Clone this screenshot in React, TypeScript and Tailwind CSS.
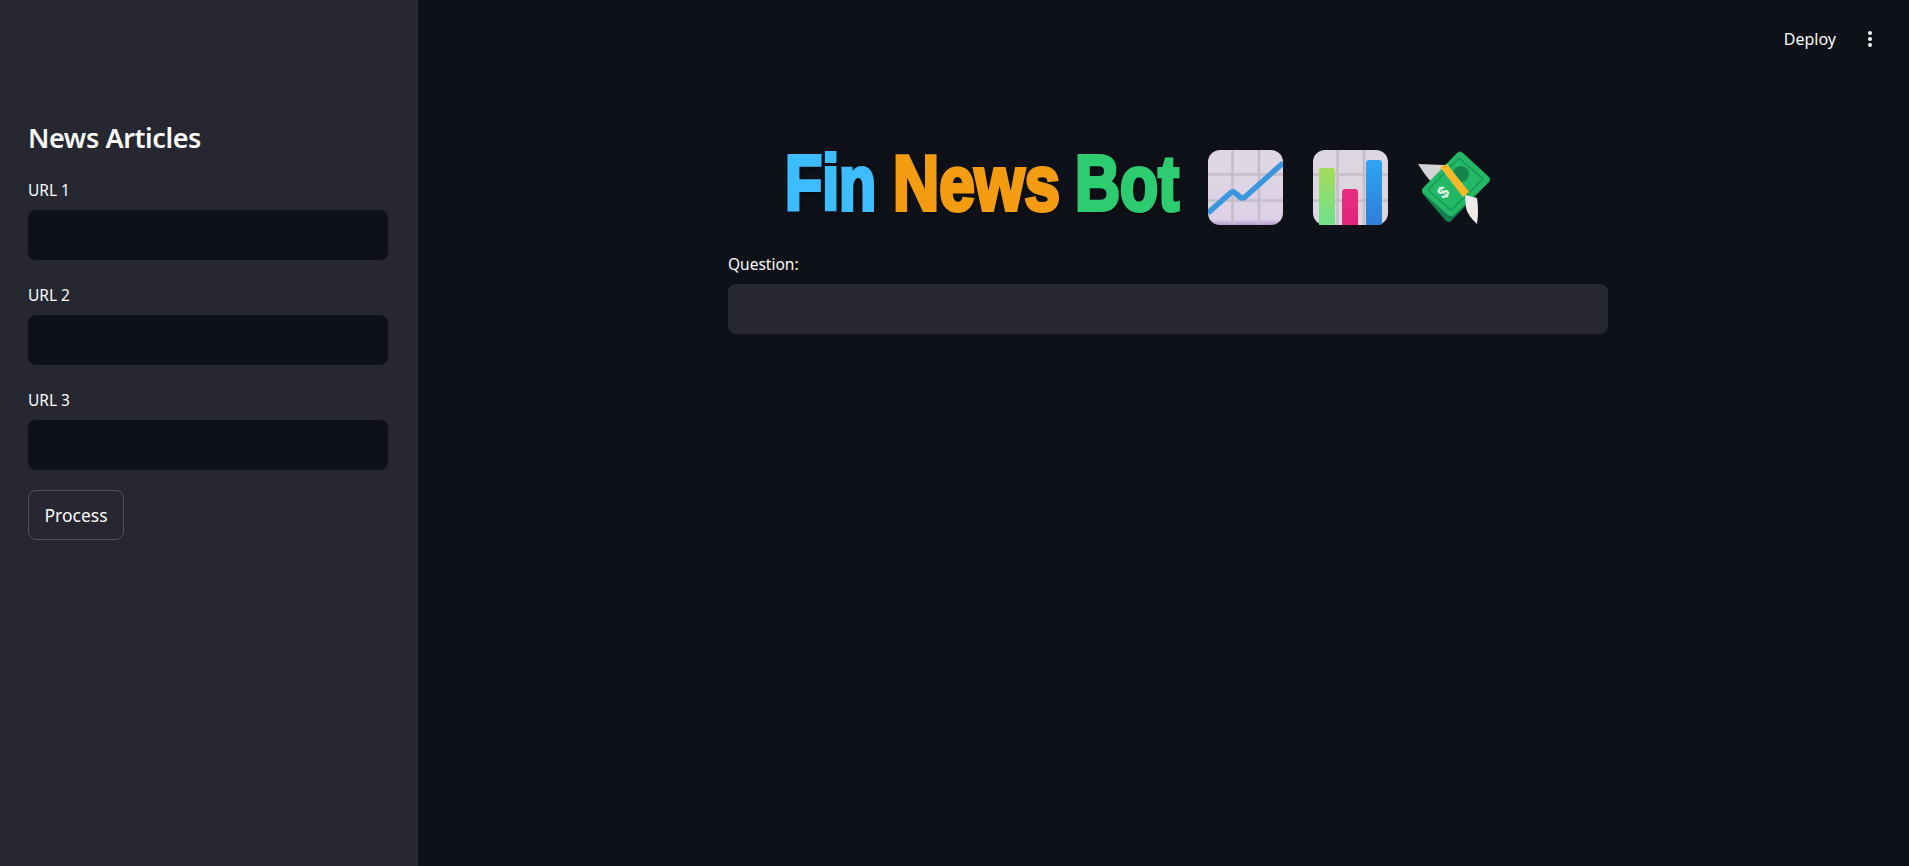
const uiFont = "font-['Noto_Sans',sans-serif]";

function ChartUp() {
  return (
    <svg width="75" height="75" viewBox="0 0 75 75" className="shrink-0">
      <defs>
        <linearGradient id="tile1" x1="0" y1="0" x2="0" y2="1">
          <stop offset="0" stopColor="#dfd8e3" />
          <stop offset="0.93" stopColor="#dcd0e6" />
          <stop offset="1" stopColor="#b79ad0" />
        </linearGradient>
      </defs>
      <rect width="75" height="75" rx="12" fill="url(#tile1)" />
      <path d="M24.500 0V75M51 0V75M0 24.500H75M0 50.500H75" stroke="#c4bdca" strokeWidth="2.500" />
      <path d="M0 63L23 42.500Q24.500 41 26.500 42.500L32 47Q34.500 49 37 47L75 13" fill="none" stroke="#3a96dd" strokeWidth="5.500" />
    </svg>
  );
}

function BarChart() {
  return (
    <svg width="75" height="75" viewBox="0 0 75 75" className="shrink-0">
      <defs>
        <linearGradient id="greenBar" x1="0" y1="0" x2="0" y2="1">
          <stop offset="0" stopColor="#a5dc5c" />
          <stop offset="1" stopColor="#6fe08c" />
        </linearGradient>
        <linearGradient id="pinkBar" x1="0" y1="0" x2="0" y2="1">
          <stop offset="0" stopColor="#e8307f" />
          <stop offset="1" stopColor="#e0247a" />
        </linearGradient>
        <linearGradient id="blueBar" x1="0" y1="0" x2="0" y2="1">
          <stop offset="0" stopColor="#2fa4f2" />
          <stop offset="1" stopColor="#2f7fd6" />
        </linearGradient>
      </defs>
      <rect width="75" height="75" rx="12" fill="#dcd6e0" />
      <path d="M24.500 0V75M51 0V75M0 24.500H75M0 50.500H75" stroke="#c4bdca" strokeWidth="2.500" />
      <path d="M6 21a3 3 0 0 1 3-3h10a3 3 0 0 1 3 3V75H6Z" fill="url(#greenBar)" />
      <path d="M29 42a3 3 0 0 1 3-3h10a3 3 0 0 1 3 3V75H29Z" fill="url(#pinkBar)" />
      <path d="M53 13a3 3 0 0 1 3-3h10a3 3 0 0 1 3 3V72a3 3 0 0 1-3 3H53Z" fill="url(#blueBar)" />
    </svg>
  );
}

function FlyingMoney() {
  return (
    <svg width="75" height="75" viewBox="0 0 75 75" className="shrink-0">
      {/* wings */}
      <path d="M0 14L26 15L30 26L14 33Q6 24 0 14Z" fill="#d6d3d6" />
      {/* bill */}
      <path d="M4 43L42 6L71 32L33 71Q31 73 28 71Z" fill="#12804f" />
      <path d="M5 38L39 3Q42 0 45 3L71 27Q73 29 71 32L36 65Q33 67 30 65L5 43Q3 40 5 38Z" fill="#22b866" />
      <path d="M10 40L41 8L65 29L33 60Z" fill="none" stroke="#159a55" strokeWidth="1.500" />
      <circle cx="43" cy="24" r="8" fill="#15854e" />
      <path d="M22 17L29 14L51 42L45 47Z" fill="#f7b928" />
      <text x="25" y="48" fontSize="17" fontWeight="700" fill="#e6f6ea" textAnchor="middle" transform="rotate(-40 25 42)" fontFamily="Liberation Sans, sans-serif">$</text>
      <path d="M47 45L59 48Q61 60 59 74Q50 66 48 58Z" fill="#efebeb" />
    </svg>
  );
}

function TextField({ label }: { label: string }) {
  return (
    <div>
      <div className="text-[15.5px] leading-[20px] text-[#fafafa] mb-[10px]">{label}</div>
      <div className="h-[50px] rounded-lg bg-[#0e1117]"></div>
    </div>
  );
}

function TitleWord({ text, className }: { text: string; className: string }) {
  return <span className={`inline-block origin-left whitespace-nowrap ${className}`}>{text}</span>;
}

export default function App() {
  return (
    <div className={`flex h-[866px] overflow-hidden bg-[#0e1117] text-[#fafafa] ${uiFont}`}>
      <aside className="w-[418px] shrink-0 bg-[#262730] pl-[28px] pr-[30px] pt-[119px]">
        <h2 className="text-[27px] leading-[38px] font-semibold tracking-[-0.4px] mb-[23px]">News Articles</h2>
        <div className="flex flex-col gap-[25px]">
          <TextField label="URL 1" />
          <TextField label="URL 2" />
          <TextField label="URL 3" />
        </div>
        <button className="mt-[20px] h-[50px] w-[96px] rounded-lg border border-[#4f5058] text-[17.5px]">
          Process
        </button>
      </aside>

      <main className="flex-1">
        <header className="flex h-[78px] items-start justify-end pt-[28px] pr-[37px]">
          <span className="text-[16px] leading-[22px]">Deploy</span>
          <div className="ml-[32px] mt-[2px] flex h-[18px] flex-col justify-between py-[1px]">
            <span className="h-[4px] w-[4px] rounded-full bg-[#fafafa]"></span>
            <span className="h-[4px] w-[4px] rounded-full bg-[#fafafa]"></span>
            <span className="h-[4px] w-[4px] rounded-full bg-[#fafafa]"></span>
          </div>
        </header>

        <div className="ml-[310px] w-[880px] pt-[72px]">
          <div className="flex h-[75px] items-center pl-[57px]">
            <h1 className="flex h-[75px] -translate-y-[4px] items-center text-[77px] leading-none font-bold font-['Liberation_Sans',sans-serif] [text-shadow:3px_3px_6px_rgba(0,0,0,0.5)]">
              <TitleWord text="Fin" className="w-[108px] scale-x-[0.79] text-[#3dbcff] [-webkit-text-stroke:4px_#3dbcff]" />
              <TitleWord text="News" className="w-[182px] scale-x-[0.83] text-[#f39c12] [-webkit-text-stroke:4px_#f39c12]" />
              <TitleWord text="Bot" className="w-[133px] scale-x-[0.81] text-[#2ecc71] [-webkit-text-stroke:4px_#2ecc71]" />
            </h1>
            <div className="flex gap-[30px]">
              <ChartUp />
              <BarChart />
              <FlyingMoney />
            </div>
          </div>
          <div className="mt-[29px] text-[15.5px] leading-[20px] mb-[10px]">Question:</div>
          <div className="h-[50px] rounded-lg bg-[#262730]"></div>
        </div>
      </main>
    </div>
  );
}
